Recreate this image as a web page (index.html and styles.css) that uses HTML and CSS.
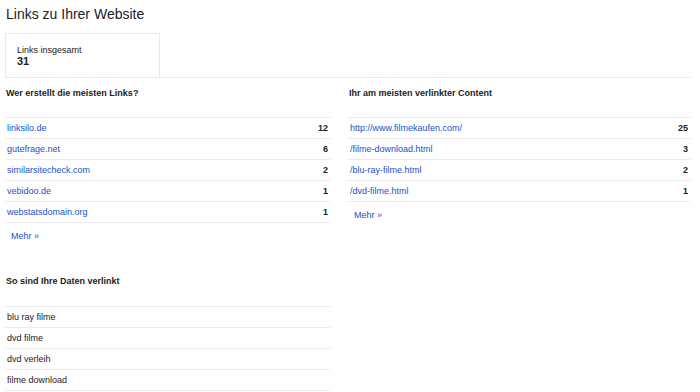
FILE: index.html
```html
<!DOCTYPE html>
<html lang="de">
<head>
    <meta charset="UTF-8">
    <meta name="viewport" content="width=device-width, initial-scale=1.0">
    <title>Links zu Ihrer Website</title>
    <link rel="stylesheet" href="styles.css">
</head>
<body>
    <h1>Links zu Ihrer Website</h1>

    <div class="stats-row">
        <div class="stat-box">
            <div class="stat-label">Links insgesamt</div>
            <div class="stat-value">31</div>
        </div>
    </div>

    <div class="columns">
        <section class="panel">
            <h2>Wer erstellt die meisten Links?</h2>
            <table class="data-table">
                <tbody>
                    <tr><td><a href="#">linksilo.de</a></td><td class="num">12</td></tr>
                    <tr><td><a href="#">gutefrage.net</a></td><td class="num">6</td></tr>
                    <tr><td><a href="#">similarsitecheck.com</a></td><td class="num">2</td></tr>
                    <tr><td><a href="#">vebidoo.de</a></td><td class="num">1</td></tr>
                    <tr><td><a href="#">webstatsdomain.org</a></td><td class="num">1</td></tr>
                </tbody>
            </table>
            <a class="more" href="#">Mehr &raquo;</a>
        </section>

        <section class="panel">
            <h2>Ihr am meisten verlinkter Content</h2>
            <table class="data-table">
                <tbody>
                    <tr><td><a href="#">http://www.filmekaufen.com/</a></td><td class="num">25</td></tr>
                    <tr><td><a href="#">/filme-download.html</a></td><td class="num">3</td></tr>
                    <tr><td><a href="#">/blu-ray-filme.html</a></td><td class="num">2</td></tr>
                    <tr><td><a href="#">/dvd-filme.html</a></td><td class="num">1</td></tr>
                </tbody>
            </table>
            <a class="more" href="#">Mehr &raquo;</a>
        </section>

        <section class="panel lower">
            <h2>So sind Ihre Daten verlinkt</h2>
            <table class="data-table">
                <tbody>
                    <tr><td>blu ray filme</td></tr>
                    <tr><td>dvd filme</td></tr>
                    <tr><td>dvd verleih</td></tr>
                    <tr><td>filme download</td></tr>
                </tbody>
            </table>
        </section>
    </div>
</body>
</html>
```

FILE: styles.css
```css
body {
    font-family: "Liberation Sans", Arial, sans-serif;
    margin: 0;
    padding: 5px 10px 0 5px;
    color: #222;
    background-color: #fff;
}
h1 {
    font-size: 14px;
    font-weight: normal;
    line-height: 18px;
    margin: 0 0 10px 1px;
    color: #222;
}
.stats-row {
    display: flex;
    border-bottom: 1px solid #ebebeb;
}
.stat-box {
    width: 142px;
    padding: 11px 0 10px 11px;
    border: 1px solid #e8e8e8;
    border-bottom: none;
}
.stat-label {
    font-size: 9px;
    line-height: 10px;
}
.stat-value {
    font-size: 11px;
    font-weight: bold;
    line-height: 12px;
}
.columns {
    display: grid;
    grid-template-columns: 325px 342px;
    column-gap: 18px;
    align-items: start;
}
.panel {
    display: flex;
    flex-direction: column;
    align-items: flex-start;
}
.panel.lower {
    margin-top: 34px;
}
h2 {
    font-size: 9px;
    font-weight: bold;
    line-height: 11px;
    margin: 10px 0 18px 1px;
}
.panel.lower h2 {
    margin-top: 0;
    margin-bottom: 19px;
}
.data-table {
    width: 100%;
    border-collapse: collapse;
    border-top: 1px solid #ebebeb;
    font-size: 9px;
}
.data-table td {
    height: 20px;
    padding: 0 2px;
    line-height: 20px;
    border-bottom: 1px solid #ebebeb;
}
.data-table .num {
    text-align: right;
    font-weight: bold;
    color: #222;
}
a {
    color: #2250c8;
    text-decoration: none;
}
.more {
    font-size: 9px;
    line-height: 11px;
    margin: 8px 0 0 6px;
}
```
